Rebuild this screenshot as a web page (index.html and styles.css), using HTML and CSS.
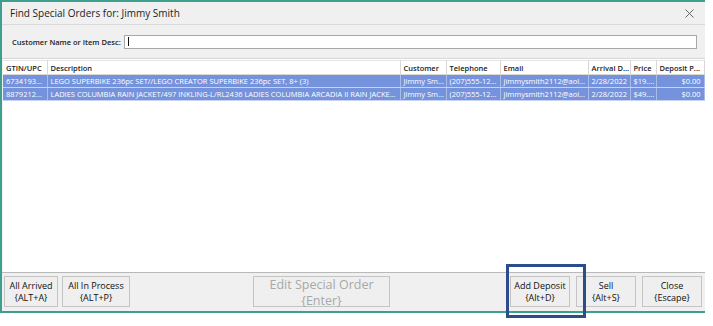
FILE: index.html
```html
<!DOCTYPE html>
<html lang="en">
    <head>
        <meta charset="UTF-8" />
        <title>Find Special Orders</title>
        <link rel="stylesheet" href="styles.css">
    </head>
    <body>
        <div class="window">
            <div class="titlebar">
                <span class="title">Find Special Orders for: Jimmy Smith</span>
                <svg class="close-x" width="9" height="9" viewBox="0 0 9 9">
                    <path d="M0.5 0.5 L8.5 8.5 M8.5 0.5 L0.5 8.5" stroke="#666" stroke-width="1" fill="none" />
                </svg>
            </div>

            <div class="search">
                <label for="search-input">Customer Name or Item Desc:</label>
                <div class="search-box" id="search-input"><span class="caret"></span></div>
            </div>

            <div class="grid">
                <table>
                    <colgroup>
                        <col style="width: 44px" />
                        <col style="width: 353px" />
                        <col style="width: 46px" />
                        <col style="width: 54px" />
                        <col style="width: 88px" />
                        <col style="width: 42px" />
                        <col style="width: 26px" />
                        <col style="width: 48px" />
                    </colgroup>
                    <thead>
                        <tr>
                            <th>GTIN/UPC</th>
                            <th>Description</th>
                            <th>Customer</th>
                            <th>Telephone</th>
                            <th>Email</th>
                            <th>Arrival D...</th>
                            <th>Price</th>
                            <th>Deposit P...</th>
                        </tr>
                    </thead>
                    <tbody>
                        <tr class="selected">
                            <td>6734193...</td>
                            <td>LEGO SUPERBIKE 236pc SET//LEGO CREATOR SUPERBIKE 236pc SET, 8+ (3)</td>
                            <td>Jimmy Sm...</td>
                            <td>(207)555-12...</td>
                            <td>jimmysmith2112@aol...</td>
                            <td>2/28/2022</td>
                            <td>$19....</td>
                            <td class="num">$0.00</td>
                        </tr>
                        <tr class="selected">
                            <td>8879212...</td>
                            <td>LADIES COLUMBIA RAIN JACKET/497 INKLING-L/RL2436 LADIES COLUMBIA ARCADIA II RAIN JACKE...</td>
                            <td>Jimmy Sm...</td>
                            <td>(207)555-12...</td>
                            <td>jimmysmith2112@aol...</td>
                            <td>2/28/2022</td>
                            <td>$49....</td>
                            <td class="num">$0.00</td>
                        </tr>
                    </tbody>
                </table>
            </div>

            <div class="footer">
                <div class="btn-group">
                    <button class="btn btn-arrived">All Arrived<br />{ALT+A}</button>
                    <button class="btn btn-process">All In Process<br />{ALT+P}</button>
                </div>
                <button class="btn btn-edit" disabled>Edit Special Order<br />{Enter}</button>
                <div class="btn-group right">
                    <button class="btn btn-small">Add Deposit<br />{Alt+D}</button>
                    <button class="btn btn-small">Sell<br />{Alt+S}</button>
                    <button class="btn btn-small">Close<br />{Escape}</button>
                </div>
                <div class="highlight"></div>
            </div>
        </div>
    </body>
</html>
```

FILE: styles.css
```css
html,
body {
    min-height: 326px;
}
body {
    margin: 0;
    background-color: #ffffff;
    font-family: 'Open Sans', 'Noto Sans', sans-serif;
    color: #1e1e1e;
}
.window {
    width: 703px;
    height: 309px;
    border-top: 2px solid #3f9f8f;
    border-left: 2px solid #3f9f8f;
    border-bottom: 2px solid #3f9f8f;
    background-color: #f0f0f0;
    display: flex;
    flex-direction: column;
}
.titlebar {
    height: 22px;
    border-bottom: 1px solid #dadada;
    display: flex;
    align-items: center;
    justify-content: space-between;
    padding: 0 11px 0 8px;
}
.title {
    font-size: 10px;
    color: #222;
}
.search {
    height: 33px;
    border-bottom: 1px solid #d6d6d6;
    display: flex;
    align-items: center;
    padding: 0 8px 0 10px;
    gap: 3px;
}
.search label {
    font-size: 7.5px;
    font-weight: 600;
    color: #222;
    white-space: nowrap;
}
.search-box {
    width: 573px;
    height: 12px;
    background-color: #fff;
    border: 1px solid #a8a8a8;
    display: flex;
    align-items: center;
    padding-left: 3px;
}
.caret {
    width: 1px;
    height: 9px;
    background-color: #111;
}
.grid {
    flex: 1;
    background-color: #fff;
    margin-left: 1px;
    padding-top: 1px;
}
table {
    border-collapse: collapse;
    table-layout: fixed;
    width: 701px;
}
th,
td {
    white-space: nowrap;
    overflow: hidden;
    text-align: left;
    padding: 0 3px;
    font-size: 7.5px;
}
th {
    height: 13px;
    font-weight: 600;
    color: #222;
    border-right: 1px solid #d8d8d8;
    border-bottom: 1px solid #d8d8d8;
    border-top: 1px solid #e4e4e4;
}
td {
    height: 12px;
    color: #fff;
    border-right: 1px solid #a9bbea;
    border-bottom: 1px solid #c9d3ef;
}
.selected {
    background-color: #7592dc;
}
td.num {
    text-align: right;
}
.footer {
    position: relative;
    height: 35px;
    border-top: 1px solid #b9b9b9;
    display: flex;
    align-items: flex-start;
    padding: 3px 3px 0 2px;
}
.btn-group {
    display: flex;
    gap: 4px;
}
.btn-group.right {
    margin-left: auto;
    gap: 6px;
}
.btn {
    height: 31px;
    margin: 0;
    padding: 0;
    background-color: #efefef;
    border: 1px solid #c4c4c4;
    font-family: 'Open Sans', 'Noto Sans', sans-serif;
    font-size: 9px;
    line-height: 12px;
    color: #111;
    text-align: center;
}
.btn-arrived {
    width: 54px;
}
.btn-process {
    width: 68px;
}
.btn-edit {
    width: 137px;
    margin-left: 123px;
    font-size: 12.5px;
    line-height: 16px;
    color: #a8a8a8;
    padding-bottom: 2px;
}
.btn-small {
    width: 60px;
}
.highlight {
    position: absolute;
    left: 504px;
    top: -9px;
    width: 74px;
    height: 48px;
    border: 3px solid #2c4c8c;
}
```
